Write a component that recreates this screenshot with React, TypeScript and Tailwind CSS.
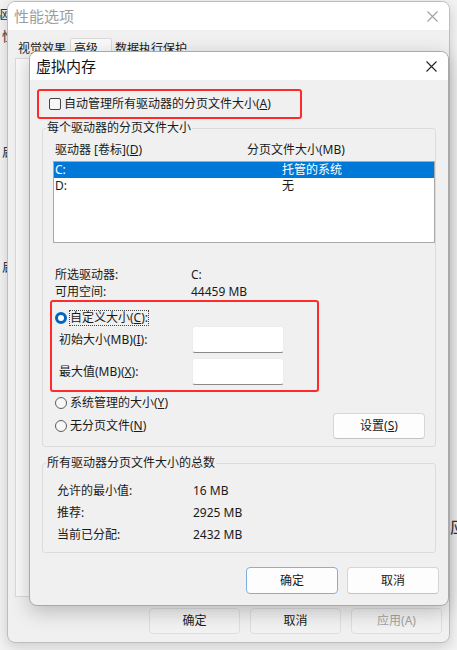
import type { ReactNode } from "react";

function CloseIcon({ color }: { color: string }) {
  return (
    <svg width="11" height="11" viewBox="0 0 11 11" fill="none" stroke={color} strokeWidth="1.1">
      <path d="M0.5 0.5 10.5 10.5 M10.5 0.5 0.5 10.5" />
    </svg>
  );
}

function Radio({ checked = false }: { checked?: boolean }) {
  return checked ? (
    <span className="box-border block h-[12px] w-[12px] shrink-0 rounded-full border-[3.5px] border-[#0067c0] bg-white" />
  ) : (
    <span className="box-border block h-[12px] w-[12px] shrink-0 rounded-full border border-[#5c5c5c] bg-[#f7f7f7]" />
  );
}

function WinButton({
  children,
  primary = false,
  muted = false,
  className = "",
}: {
  children: ReactNode;
  primary?: boolean;
  muted?: boolean;
  className?: string;
}) {
  const tone = primary
    ? "border-[#7fb0e4] bg-[#fdfdfd] text-[#1a1a1a]"
    : muted
      ? "border-[#dedede] bg-[#f2f2f2] text-[#1a1a1a]"
      : "border-[#d6d6d6] border-b-[#c2c2c2] bg-[#fdfdfd] text-[#1a1a1a]";
  return (
    <div
      className={`flex items-center justify-center rounded-[4px] border text-[12px] leading-[16px] ${tone} ${className}`}
    >
      {children}
    </div>
  );
}

const totals = [
  ["允许的最小值:", "16 MB"],
  ["推荐:", "2925 MB"],
  ["当前已分配:", "2432 MB"],
];

export default function App() {
  return (
    <div className="relative h-[650px] w-[457px] overflow-hidden bg-[#f3f3f3] font-['Noto_Sans','Noto_Sans_CJK_SC',sans-serif] text-[12px] text-[#1a1a1a]">
      {/* window behind, only its edges show */}
      <span className="absolute left-[-5px] top-[6px] text-[13px] leading-[16px] text-[#333]">驱</span>
      <span className="absolute left-[2px] top-[28px] text-[13px] leading-[16px] text-[#333]">性</span>
      <span className="absolute left-[2px] top-[143px] text-[13px] leading-[16px] text-[#333]">启</span>
      <span className="absolute left-[2px] top-[258px] text-[13px] leading-[16px] text-[#333]">启</span>
      <span className="absolute left-[450px] top-[516px] text-[17px] leading-[22px] text-[#333]">应</span>

      {/* 性能选项 */}
      <div className="absolute left-[7px] top-[1px] flex h-[642px] w-[443px] flex-col overflow-hidden rounded-[8px] border border-[#bdbdbd] bg-[#f0f0f0] shadow-[0_4px_14px_rgba(0,0,0,0.16)]">
        <div className="flex h-[28px] shrink-0 items-center justify-between bg-white pl-[6px] pr-[11px]">
          <span className="text-[15px] leading-[20px] text-[#9d9d9d]">性能选项</span>
          <CloseIcon color="#a0a0a0" />
        </div>
        <div className="ml-[7px] mt-[8px] flex h-[20px] leading-[16px]">
          <div className="w-[55px] pl-[3px] pt-[3px]">视觉效果</div>
          <div className="w-[42px] rounded-t-[2px] border border-b-0 border-[#d9d9d9] bg-[#f9f9f9] pl-[3px] pt-[2px]">高级</div>
          <div className="pl-[3px] pt-[3px]">数据执行保护</div>
        </div>
        <div className="ml-[7px] h-[539px] w-[428px] border border-[#dadada] bg-[#f9f9f9]" />
        <div className="mr-[7px] mt-[11px] flex justify-end gap-[10px]">
          <WinButton muted className="h-[26px] w-[91px]">确定</WinButton>
          <WinButton muted className="h-[26px] w-[91px]">取消</WinButton>
          <WinButton muted className="h-[26px] w-[91px] !text-[#a3a3a3]">
            应用(A)
          </WinButton>
        </div>
      </div>

      {/* 虚拟内存 */}
      <div className="absolute left-[29px] top-[51px] flex h-[555px] w-[420px] flex-col overflow-hidden rounded-[8px] border border-[#a9a9a9] bg-[#f0f0f0] shadow-[0_6px_20px_rgba(0,0,0,0.22)]">
        <div className="flex h-[28px] shrink-0 items-center justify-between bg-white pl-[6px] pr-[11px]">
          <span className="text-[15px] leading-[20px] text-[#111]">虚拟内存</span>
          <CloseIcon color="#222" />
        </div>

        <div className="ml-[7px] mt-[9px] flex h-[30px] w-[265px] items-center rounded-[3px] border-2 border-[#ff2a2a] pl-[10px]">
          <span className="box-border block h-[12px] w-[12px] rounded-[2px] border border-[#444] bg-[#f7f7f7]" />
          <span className="ml-[3px] leading-[16px]">
            自动管理所有驱动器的分页文件大小(<u>A</u>)
          </span>
        </div>

        <fieldset className="ml-[12px] mt-[1px] box-border h-[327px] w-[394px] rounded-[3px] border border-[#dcdcdc]">
          <legend className="ml-[3px] px-[1px] leading-[16px]">每个驱动器的分页文件大小</legend>
          <div className="mt-[6px] flex h-[16px] leading-[16px]">
            <span className="w-[204px] pl-[12px]">
              驱动器 [卷标](<u>D</u>)
            </span>
            <span>分页文件大小(MB)</span>
          </div>
          <div className="ml-[10px] mt-[3px] box-border h-[82px] w-[382px] border border-[#a9a9a9] bg-white">
            <div className="flex h-[16px] bg-[#0078d7] leading-[16px] text-white">
              <span className="w-[228px] pl-[1px]">C:</span>
              <span>托管的系统</span>
            </div>
            <div className="flex h-[16px] leading-[16px]">
              <span className="w-[228px] pl-[1px]">D:</span>
              <span>无</span>
            </div>
          </div>
          <div className="mt-[23px] flex h-[17px] items-center pl-[12px]">
            <span className="w-[136px]">所选驱动器:</span>
            <span>C:</span>
          </div>
          <div className="flex h-[17px] items-center pl-[12px]">
            <span className="w-[136px]">可用空间:</span>
            <span>44459 MB</span>
          </div>

          <div className="ml-[7px] box-border h-[92px] w-[269px] rounded-[3px] border-2 border-[#ff2a2a] pt-[8px]">
            <div className="flex h-[16px] items-center pl-[3px]">
              <Radio checked />
              <span className="ml-[2px] border border-dotted border-[#444] leading-[14px]">
                自定义大小(<u>C</u>):
              </span>
            </div>
            <div className="flex h-[27px] items-center pl-[7px]">
              <span className="w-[133px]">
                初始大小(MB)(<u>I</u>):
              </span>
              <span className="box-border block h-[27px] w-[92px] rounded-[3px] border border-[#ececec] border-b-[#8a8a8a] bg-white" />
            </div>
            <div className="mt-[5px] flex h-[27px] items-center pl-[7px]">
              <span className="w-[133px]">
                最大值(MB)(<u>X</u>):
              </span>
              <span className="box-border block h-[27px] w-[92px] rounded-[3px] border border-[#ececec] border-b-[#8a8a8a] bg-white" />
            </div>
          </div>

          <div className="mt-[3px] flex h-[16px] items-center pl-[12px]">
            <Radio />
            <span className="ml-[3px] leading-[16px]">
              系统管理的大小(<u>Y</u>)
            </span>
          </div>
          <div className="mt-[2px] flex h-[26px] items-center justify-between pl-[12px] pr-[10px]">
            <div className="flex items-center">
              <Radio />
              <span className="ml-[3px] leading-[16px]">
                无分页文件(<u>N</u>)
              </span>
            </div>
            <WinButton className="h-[26px] w-[92px]">
              设置(<u>S</u>)
            </WinButton>
          </div>
        </fieldset>

        <fieldset className="ml-[12px] mt-[8px] box-border h-[98px] w-[394px] rounded-[3px] border border-[#dcdcdc]">
          <legend className="ml-[3px] px-[1px] leading-[16px]">所有驱动器分页文件大小的总数</legend>
          <div className="mt-[9px]">
            {totals.map(([label, value]) => (
              <div key={label} className="flex h-[22px] items-center pl-[14px]">
                <span className="w-[136px]">{label}</span>
                <span>{value}</span>
              </div>
            ))}
          </div>
        </fieldset>

        <div className="mt-[14px] flex justify-end gap-[9px] pr-[9px]">
          <WinButton primary className="h-[27px] w-[92px]">确定</WinButton>
          <WinButton className="h-[27px] w-[92px]">取消</WinButton>
        </div>
      </div>
    </div>
  );
}
